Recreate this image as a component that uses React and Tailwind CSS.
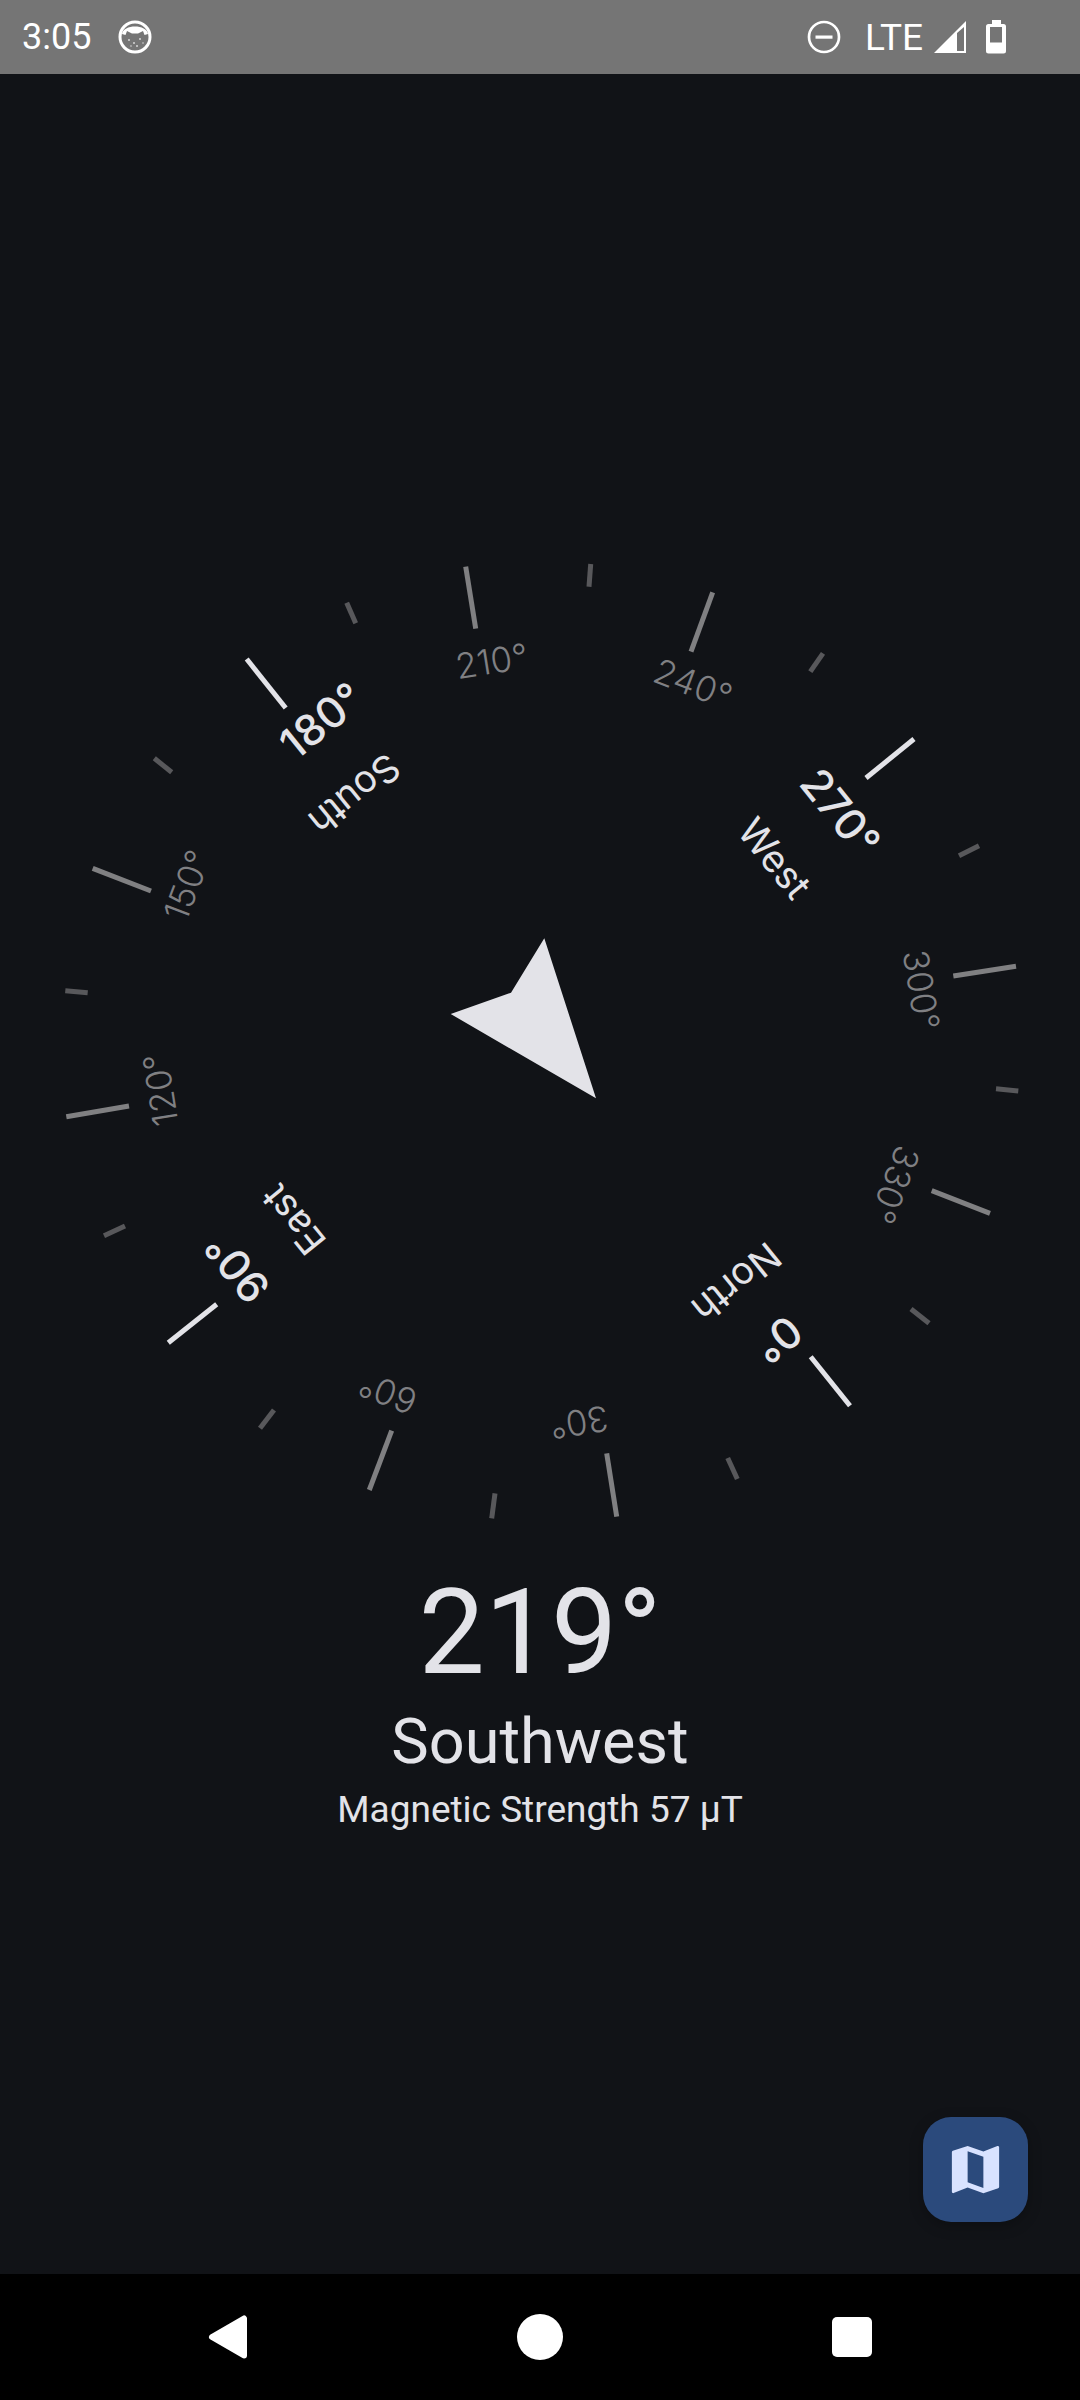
const ticks = [
  [246.7, 659, 285.7, 708, "c"], [850, 1405.7, 810.7, 1356.7, "c"], [914, 739, 866, 778, "c"], [168.3, 1342.7, 216.7, 1304.3, "c"],
  [465.7, 566.7, 475.7, 628.7, "m"], [92.7, 868.3, 151, 891, "m"], [712.7, 592.3, 691, 651.7, "m"], [1016, 966.3, 953.3, 976, "m"],
  [66.3, 1116.7, 129, 1106, "m"], [369.3, 1490, 391.7, 1430.7, "m"], [990, 1213.3, 931.7, 1190.7, "m"], [616.7, 1516.7, 606.7, 1453.3, "m"],
  [346.7, 602.7, 355.7, 623.3, "s"], [154.3, 758.3, 171.7, 772.3, "s"], [65.3, 990.7, 87.7, 992.7, "s"], [590.7, 564, 589, 586.7, "s"],
  [823, 653.3, 810.3, 671.7, "s"], [979, 845.7, 959, 855.7, "s"], [104, 1235.7, 125, 1226, "s"], [260, 1428.3, 274, 1410, "s"],
  [491.7, 1518.3, 495, 1493.3, "s"], [929, 1323.3, 911, 1309, "s"], [1018.3, 1091, 996, 1088.7, "s"], [737.3, 1479, 727.7, 1458, "s"],
];
const tickStroke = { c: "stroke-[#e3e3e8]", m: "stroke-[#808082]", s: "stroke-[#58585b]" };

const minor = [
  ["210°", 491.7, 660.7, -9], ["240°", 693.3, 683.3, 21], ["300°", 921.7, 990, 81], ["330°", 895, 1185, 111],
  ["30°", 579.3, 1422.7, 171], ["60°", 387.7, 1393.3, -159], ["120°", 160, 1090, -99], ["150°", 186.7, 885, -69],
];
const major = [["180°", 321, 720, -39], ["270°", 841, 812, 51], ["0°", 778.3, 1340, 141], ["90°", 236.7, 1268.3, -129]];
const cardinal = [["South", 355, 795, 141], ["West", 775, 858, 51], ["North", 736.7, 1283, 141], ["East", 293, 1220, -129]];

function Label({ t, x, y, r, cls }) {
  return (
    <text x={x} y={y} textAnchor="middle" dominantBaseline="central" transform={`rotate(${r} ${x} ${y})`} className={cls}>
      {t}
    </text>
  );
}

function Dial() {
  return (
    <svg width="1080" height="1480" viewBox="0 74 1080 1480" className="block">
      {ticks.map(([a, b, c, d, k], i) => (
        <line key={i} x1={a} y1={b} x2={c} y2={d} strokeWidth="5" className={tickStroke[k]} />
      ))}
      {minor.map(([t, x, y, r]) => (
        <Label key={t} t={t} x={x} y={y} r={r} cls="fill-[#808083] font-['Inter'] text-[35px] font-light" />
      ))}
      {major.map(([t, x, y, r]) => (
        <Label key={t} t={t} x={x} y={y} r={r} cls="fill-[#e3e3e8] font-['Inter'] text-[43px] font-medium" />
      ))}
      {cardinal.map(([t, x, y, r]) => (
        <Label key={t} t={t} x={x} y={y} r={r} cls="fill-[#e3e3e8] font-['Inter'] text-[38px] font-normal" />
      ))}
      <polygon points="544.3,938.3 511,992.7 450.7,1014 596,1098.3" className="fill-[#e3e3e8]" />
    </svg>
  );
}

function StatusBar() {
  return (
    <div className="flex h-[74px] items-center bg-[#757575] text-white font-['Roboto']">
      <span className="ml-[22px] text-[36px] leading-none">3:05</span>
      <svg width="36" height="36" viewBox="0 0 36 36" className="ml-[26px]">
        <circle cx="18" cy="18" r="15" fill="none" stroke="white" strokeWidth="3" />
        <path d="M5 15 C6 5 30 5 31 15 L27.5 16 L26 12 L21 14.5 H15 L10 12 L8.5 16 Z" fill="white" />
        <g fill="white" opacity="0.7">
          <circle cx="12" cy="21" r="1" /><circle cx="17" cy="24" r="1" /><circle cx="23" cy="20" r="1" />
          <circle cx="20" cy="27" r="1" /><circle cx="14" cy="27" r="0.8" /><circle cx="26" cy="24" r="0.8" />
        </g>
      </svg>
      <svg width="36" height="36" viewBox="0 0 36 36" className="ml-auto">
        <circle cx="18" cy="18" r="15" fill="none" stroke="white" strokeWidth="2.7" />
        <rect x="9.5" y="16.5" width="17" height="3.2" fill="white" />
      </svg>
      <span className="ml-[23px] text-[37px] leading-none">LTE</span>
      <svg width="34" height="34" viewBox="0 0 34 34" className="ml-[10px]">
        <path d="M33 1 V33 H1 Z M31 7 L24 13 V31 H31 Z" fill="white" fillRule="evenodd" />
      </svg>
      <svg width="20" height="34" viewBox="0 0 20 34" className="ml-[19px] mr-[74px]">
        <path d="M6 0 H15 V4 H17.5 Q20 4 20 6.5 V31 Q20 33.5 17.5 33.5 H2.5 Q0 33.5 0 31 V6.5 Q0 4 2.5 4 H6 Z M4 7 V22.5 H16 V7 Z" fill="white" fillRule="evenodd" />
      </svg>
    </div>
  );
}

function NavBar() {
  return (
    <div className="flex h-[126px] items-center justify-center gap-[252px] bg-black">
      <svg width="60" height="60" viewBox="198 2307 60 60">
        <polygon points="212,2337 244,2318.5 244,2355.5" fill="white" stroke="white" strokeWidth="6" strokeLinejoin="round" />
      </svg>
      <div className="flex h-[60px] w-[60px] items-center justify-center">
        <div className="h-[46px] w-[46px] rounded-full bg-white" />
      </div>
      <div className="flex h-[60px] w-[60px] items-center justify-center">
        <div className="h-[40px] w-[40px] rounded-[5px] bg-white" />
      </div>
    </div>
  );
}

export default function App() {
  return (
    <div className="relative flex h-[2400px] w-[1080px] flex-col overflow-hidden bg-[#111317] font-['Roboto']">
      <StatusBar />
      <div className="flex flex-1 flex-col items-center">
        <Dial />
        <div className="text-[118px] leading-[138px] mt-[10px] text-[#e3e3e8]">219°</div>
        <div className="text-[63px] leading-[74px] mt-[3px] text-[#e3e3e8]">Southwest</div>
        <div className="text-[37px] leading-[44px] mt-[9px] text-[#e3e3e8]">Magnetic Strength 57 µT</div>
      </div>
      <button className="absolute bottom-[178px] right-[52px] flex h-[105px] w-[105px] items-center justify-center rounded-[28px] bg-[#2b4a7c] shadow-[0_4px_14px_rgba(0,0,0,0.25)]">
        <svg width="63" height="63" viewBox="0 0 24 24" fill="#d8e2ff">
          <path d="M20.5 3l-.16.03L15 5.1 9 3 3.36 4.9c-.21.07-.36.25-.36.48V20.5c0 .28.22.5.5.5l.16-.03L9 18.9l6 2.1 5.64-1.9c.21-.07.36-.25.36-.48V3.5c0-.28-.22-.5-.5-.5zM15 19l-6-2.11V5l6 2.11V19z" />
        </svg>
      </button>
      <NavBar />
    </div>
  );
}
